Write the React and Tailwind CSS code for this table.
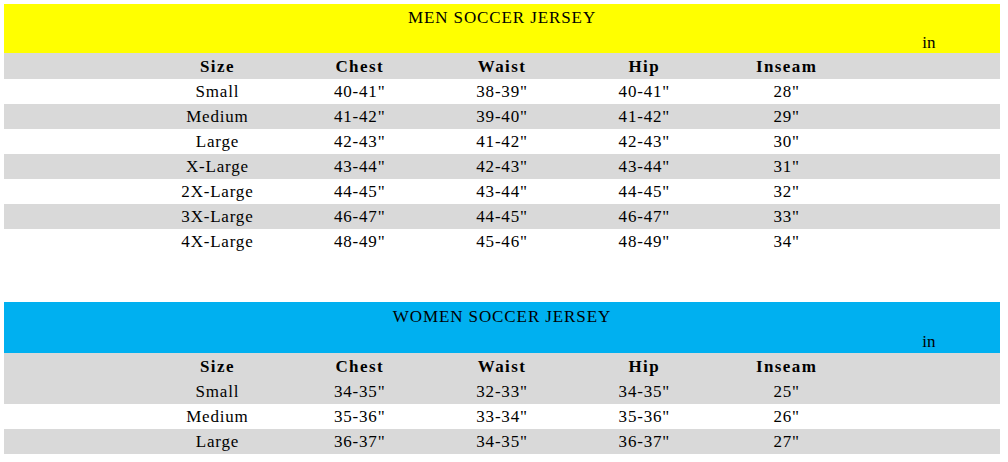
import React from 'react';

const cols = ['Size', 'Chest', 'Waist', 'Hip', 'Inseam'];

const men = [
  ['Small', '40-41"', '38-39"', '40-41"', '28"'],
  ['Medium', '41-42"', '39-40"', '41-42"', '29"'],
  ['Large', '42-43"', '41-42"', '42-43"', '30"'],
  ['X-Large', '43-44"', '42-43"', '43-44"', '31"'],
  ['2X-Large', '44-45"', '43-44"', '44-45"', '32"'],
  ['3X-Large', '46-47"', '44-45"', '46-47"', '33"'],
  ['4X-Large', '48-49"', '45-46"', '48-49"', '34"'],
];

const women = [
  ['Small', '34-35"', '32-33"', '34-35"', '25"'],
  ['Medium', '35-36"', '33-34"', '35-36"', '26"'],
  ['Large', '36-37"', '34-35"', '36-37"', '27"'],
];

const Row = ({ cells, gray, bold, h = 'h-[25px]' }) => (
  <div className={`grid grid-cols-7 ${h} items-center ${gray ? 'bg-[#d9d9d9]' : 'bg-white'}`}>
    <div />
    {cells.map((c, i) => (
      <div
        key={i}
        className={`text-center leading-none ${bold ? 'font-bold tracking-[1.4px]' : 'tracking-[0.8px]'}`}
      >
        {c}
      </div>
    ))}
    <div />
  </div>
);

const SizeTable = ({ title, band, rows, grayOdd, titleH, unitH }) => (
  <div>
    <div className={band}>
      <div className={`${titleH} flex items-center justify-center pt-[2px] leading-none tracking-[0.9px]`}>
        {title}
      </div>
      <div className={`${unitH} grid grid-cols-7 items-center pt-[2px]`}>
        <div className="col-start-7 text-center leading-none">in</div>
      </div>
    </div>
    <Row cells={cols} gray bold h="h-[26px]" />
    {rows.map((r, i) => (
      <Row key={r[0]} cells={r} gray={i % 2 === (grayOdd ? 1 : 0)} />
    ))}
  </div>
);

export default function App() {
  return (
    <div
      className="w-[1008px] h-[462px] bg-white pt-[4px] pl-[4px] text-[17px] text-black"
      style={{ fontFamily: '"Liberation Serif", "Times New Roman", serif' }}
    >
      <div className="w-[996px]">
        <SizeTable
          title="MEN SOCCER JERSEY"
          band="bg-[#ffff00]"
          rows={men}
          grayOdd
          titleH="h-[25px]"
          unitH="h-[24px]"
        />
        <div className="h-[48px]" />
        <SizeTable
          title="WOMEN SOCCER JERSEY"
          band="bg-[#00b0f0]"
          rows={women}
          grayOdd={false}
          titleH="h-[26px]"
          unitH="h-[25px]"
        />
      </div>
    </div>
  );
}
